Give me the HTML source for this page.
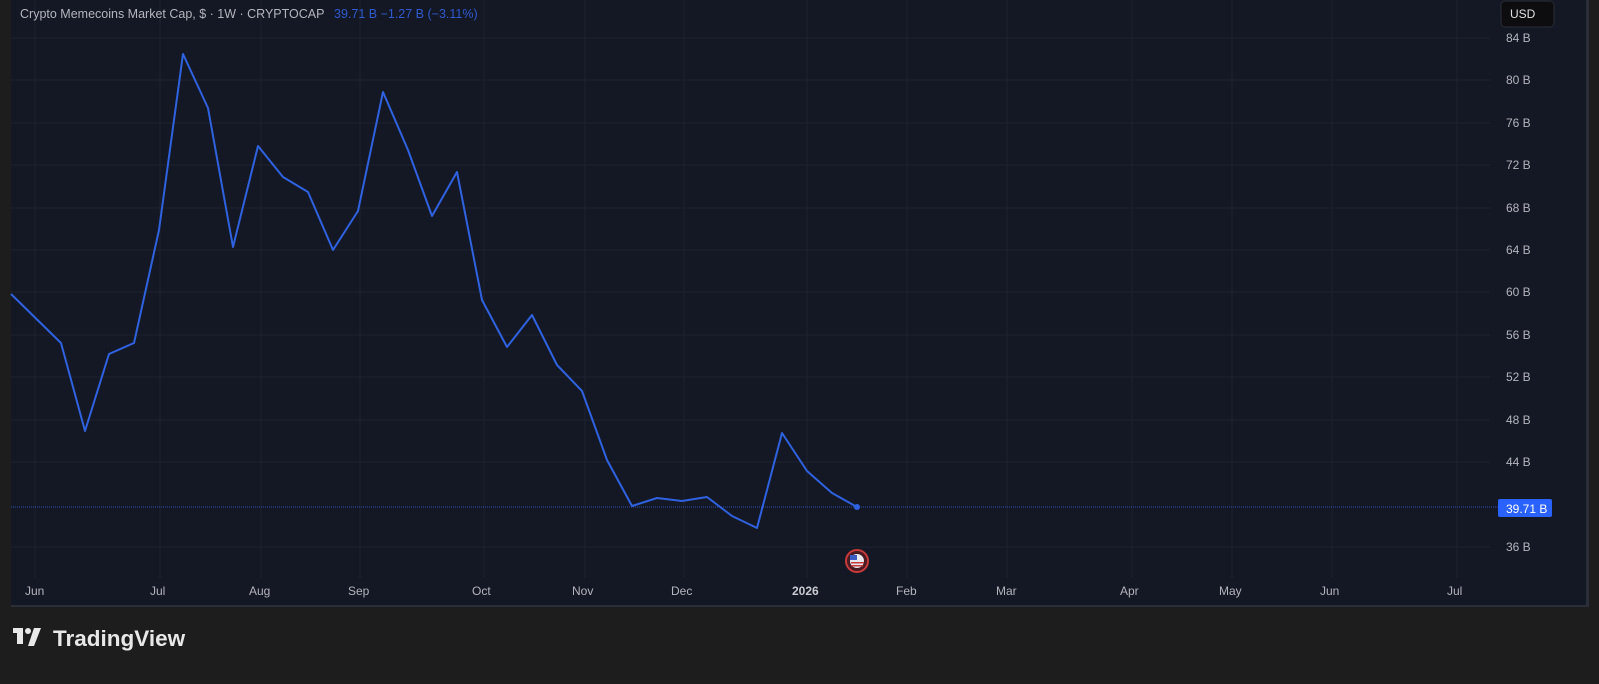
<!DOCTYPE html>
<html><head><meta charset="utf-8"><style>
body{margin:0;width:1599px;height:684px;background:#1d1d1d;overflow:hidden;font-family:"Liberation Sans",sans-serif}
</style></head><body>
<svg width="1599" height="684" style="position:absolute;left:0;top:0" font-family="Liberation Sans, sans-serif">
<rect x="11" y="0" width="1578" height="606" fill="#141824"/>
<rect x="11" y="605" width="1578" height="2" fill="#2a2e39"/>
<rect x="1586" y="0" width="3" height="606" fill="#2a2e39"/>
<g stroke="#1e2230" stroke-width="1">
<line x1="11" x2="1490" y1="38" y2="38"/><line x1="11" x2="1490" y1="80" y2="80"/><line x1="11" x2="1490" y1="123" y2="123"/><line x1="11" x2="1490" y1="165" y2="165"/><line x1="11" x2="1490" y1="208" y2="208"/><line x1="11" x2="1490" y1="250" y2="250"/><line x1="11" x2="1490" y1="292" y2="292"/><line x1="11" x2="1490" y1="335" y2="335"/><line x1="11" x2="1490" y1="377" y2="377"/><line x1="11" x2="1490" y1="420" y2="420"/><line x1="11" x2="1490" y1="462" y2="462"/><line x1="11" x2="1490" y1="547" y2="547"/>
<line y1="0" y2="578" x1="35" x2="35"/><line y1="0" y2="578" x1="160" x2="160"/><line y1="0" y2="578" x1="261" x2="261"/><line y1="0" y2="578" x1="360" x2="360"/><line y1="0" y2="578" x1="484" x2="484"/><line y1="0" y2="578" x1="585" x2="585"/><line y1="0" y2="578" x1="684" x2="684"/><line y1="0" y2="578" x1="807" x2="807"/><line y1="0" y2="578" x1="907" x2="907"/><line y1="0" y2="578" x1="1007" x2="1007"/><line y1="0" y2="578" x1="1132" x2="1132"/><line y1="0" y2="578" x1="1232" x2="1232"/><line y1="0" y2="578" x1="1332" x2="1332"/><line y1="0" y2="578" x1="1457" x2="1457"/>
</g>
<line x1="11" x2="1498" y1="507" y2="507" stroke="#2d4fb0" stroke-width="1" stroke-dasharray="1 1"/>
<polyline fill="none" stroke="#2f62e0" stroke-width="2" stroke-linejoin="round" points="11,294 61,343 85,431 109,354 134,343 159,230 183,54 208,108 233,247 258,146 283,177 308,192 333,250 358,211 383,92 408,150 432,216 457,172 482,300 507,347 532,315 557,365 582,391 607,460 632,506 657,498 682,501 707,497 732,516 757,528 782,433 807,471 832,493 857,507"/>
<circle cx="857" cy="507" r="3" fill="#2f62e0"/>
<circle cx="857" cy="561" r="11" fill="#4a1a22" stroke="#c83a3a" stroke-width="2"/>
<circle cx="857" cy="561" r="7" fill="#e8e8f0"/>
<rect x="850" y="555" width="7" height="5" fill="#3b5bc4"/>
<rect x="851" y="562" width="13" height="1.5" fill="#c83a3a"/><rect x="851" y="565" width="12" height="1.5" fill="#c83a3a"/>
<g fill="#b2b5be" font-size="12">
<text x="20" y="18" font-size="12.5">Crypto Memecoins Market Cap, $ · 1W · CRYPTOCAP</text>
<text x="334" y="18" fill="#2f5ad0" font-size="12.5">39.71 B  −1.27 B (−3.11%)</text>
<text x="1506" y="42">84 B</text><text x="1506" y="84">80 B</text><text x="1506" y="127">76 B</text><text x="1506" y="169">72 B</text><text x="1506" y="212">68 B</text><text x="1506" y="254">64 B</text><text x="1506" y="296">60 B</text><text x="1506" y="339">56 B</text><text x="1506" y="381">52 B</text><text x="1506" y="424">48 B</text><text x="1506" y="466">44 B</text><text x="1506" y="551">36 B</text>
<text x="25" y="595">Jun</text><text x="150" y="595">Jul</text><text x="249" y="595">Aug</text><text x="348" y="595">Sep</text><text x="472" y="595">Oct</text><text x="572" y="595">Nov</text><text x="671" y="595">Dec</text><text x="792" y="595" font-weight="bold" fill="#c8cad0">2026</text><text x="896" y="595">Feb</text><text x="996" y="595">Mar</text><text x="1120" y="595">Apr</text><text x="1219" y="595">May</text><text x="1320" y="595">Jun</text><text x="1447" y="595">Jul</text>
</g>
<rect x="1498" y="499" width="54" height="18" rx="2" fill="#2962ff"/>
<text x="1506" y="513" fill="#fff" font-size="12">39.71 B</text>
<rect x="1501" y="1" width="53" height="26" rx="4" fill="#0d0d0f" stroke="#2a2e39"/>
<text x="1510" y="18" fill="#e0e0e0" font-size="12">USD</text>
<g fill="#e8e8e8">
<rect x="13" y="628" width="10" height="5"/><rect x="17" y="628" width="6" height="16"/>
<circle cx="28" cy="631" r="3"/>
<polygon points="34,628 41,628 34,646 28,646"/>
<text x="53" y="646" font-size="22.5" font-weight="bold">TradingView</text>
</g>
</svg>
</body></html>
